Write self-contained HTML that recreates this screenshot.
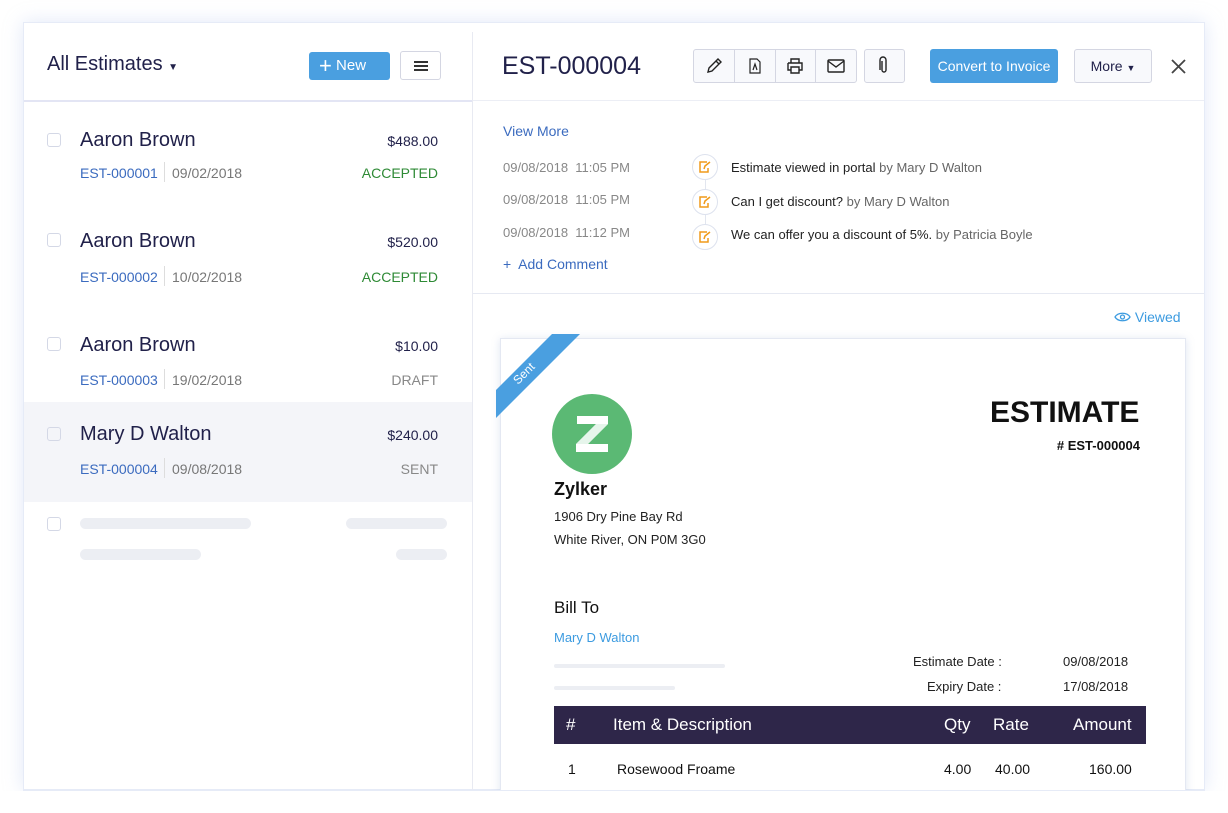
<!DOCTYPE html>
<html><head><meta charset="utf-8"><style>
*{box-sizing:border-box;margin:0;padding:0}
body{width:1228px;height:813px;background:#fff;font-family:"Liberation Sans",sans-serif;position:relative;overflow:hidden;color:#21214a}
.a{position:absolute}
.card{left:23px;top:22px;width:1182px;height:768px;border:1px solid #e6ebf7;box-shadow:0 0 18px rgba(170,190,235,.35);background:#fff}
.btn{border:1px solid #d4d6e2;border-radius:3px;background:#f8f9fc}
.name{font-size:20px;color:#21214a}
.amt{font-size:14px;color:#21214a;text-align:right;width:120px}
.est{font-size:14px;color:#3b6bbf}
.dt{font-size:14px;color:#777}
.st{font-size:14px;text-align:right;width:120px}
.cb{width:14px;height:14px;border:1.5px solid #d4d8e6;border-radius:3px}
.bar{background:#eceef3;border-radius:6px}
.t{font-size:13px;color:#222}
.g{font-size:13px;color:#888}
.ic{width:26px;height:26px;border-radius:50%;border:1px solid #dde2ee;background:#fff}
</style></head><body>
<div class="a card"></div>
<div class="a" style="left:472px;top:32px;width:1px;height:758px;background:#e8eaf2"></div>
<div class="a" style="left:24px;top:100px;width:448px;height:2px;background:#e3e5f4"></div>
<div class="a" style="left:473px;top:100px;width:731px;height:1px;background:#eceef5"></div>
<div class="a" style="left:47px;top:53px;font-size:20px;color:#21214a">All Estimates <span style="font-size:10px">▼</span></div>
<div class="a" style="left:309px;top:52px;width:81px;height:28px;background:#4a9fe0;border-radius:3px;color:#fff;font-size:15px;line-height:28px;padding-left:10px"><span style="font-size:22px;vertical-align:-3px;font-weight:300">+</span> New</div>
<div class="a btn" style="left:400px;top:51px;width:41px;height:29px;background:#fff"><div class="a" style="left:13px;top:9px;width:14px;height:2px;background:#333;box-shadow:0 4px 0 #333,0 8px 0 #333"></div></div>

<div class="a" style="left:24px;top:402px;width:448px;height:100px;background:#f4f5f9"></div>
<div class="a cb" style="left:47px;top:133px"></div>
<div class="a name" style="left:80px;top:129px">Aaron Brown</div>
<div class="a amt" style="left:318px;top:133px">$488.00</div>
<div class="a est" style="left:80px;top:165px">EST-000001</div><div class="a" style="left:164px;top:162px;width:1px;height:20px;background:#ddd"></div><div class="a dt" style="left:172px;top:165px">09/02/2018</div>
<div class="a st" style="left:318px;top:165px;color:#2e8a35">ACCEPTED</div>

<div class="a cb" style="left:47px;top:233px"></div>
<div class="a name" style="left:80px;top:230px">Aaron Brown</div>
<div class="a amt" style="left:318px;top:234px">$520.00</div>
<div class="a est" style="left:80px;top:269px">EST-000002</div><div class="a" style="left:164px;top:266px;width:1px;height:20px;background:#ddd"></div><div class="a dt" style="left:172px;top:269px">10/02/2018</div>
<div class="a st" style="left:318px;top:269px;color:#2e8a35">ACCEPTED</div>

<div class="a cb" style="left:47px;top:337px"></div>
<div class="a name" style="left:80px;top:334px">Aaron Brown</div>
<div class="a amt" style="left:318px;top:338px">$10.00</div>
<div class="a est" style="left:80px;top:372px">EST-000003</div><div class="a" style="left:164px;top:369px;width:1px;height:20px;background:#ddd"></div><div class="a dt" style="left:172px;top:372px">19/02/2018</div>
<div class="a st" style="left:318px;top:372px;color:#888">DRAFT</div>

<div class="a cb" style="left:47px;top:427px"></div>
<div class="a name" style="left:80px;top:423px">Mary D Walton</div>
<div class="a amt" style="left:318px;top:427px">$240.00</div>
<div class="a est" style="left:80px;top:461px">EST-000004</div><div class="a" style="left:164px;top:458px;width:1px;height:20px;background:#ddd"></div><div class="a dt" style="left:172px;top:461px">09/08/2018</div>
<div class="a st" style="left:318px;top:461px;color:#888">SENT</div>

<div class="a cb" style="left:47px;top:517px"></div>
<div class="a bar" style="left:80px;top:518px;width:171px;height:11px"></div>
<div class="a bar" style="left:346px;top:518px;width:101px;height:11px"></div>
<div class="a bar" style="left:80px;top:549px;width:121px;height:11px"></div>
<div class="a bar" style="left:396px;top:549px;width:51px;height:11px"></div>

<div class="a" style="left:502px;top:52px;font-size:25px;color:#21214a">EST-000004</div>
<div class="a btn" style="left:693px;top:49px;width:164px;height:34px"></div>
<div class="a" style="left:734px;top:50px;width:1px;height:32px;background:#d4d6e2;box-shadow:41px 0 #d4d6e2,81px 0 #d4d6e2"></div>
<svg class="a" style="left:704px;top:56px" width="20" height="20" viewBox="0 0 20 20" fill="none" stroke="#222" stroke-width="1.4"><path d="M4 16l1-4 9-9 3 3-9 9z M12 5l3 3"/></svg>
<svg class="a" style="left:746px;top:57px" width="18" height="18" viewBox="0 0 18 18" fill="none" stroke="#222" stroke-width="1.2"><path d="M4 2h7l3 3v11H4z M7 13l2-6 2 6"/></svg>
<svg class="a" style="left:785px;top:56px" width="20" height="20" viewBox="0 0 20 20" fill="none" stroke="#222" stroke-width="1.4"><path d="M6 7V3h8v4 M3 7h14v7h-3 M6 14H3V7 M6 11h8v6H6z"/></svg>
<svg class="a" style="left:826px;top:57px" width="20" height="18" viewBox="0 0 20 18" fill="none" stroke="#222" stroke-width="1.4"><rect x="2" y="3" width="16" height="12" rx="1"/><path d="M2 4l8 6 8-6"/></svg>
<div class="a btn" style="left:864px;top:49px;width:41px;height:34px"></div>
<svg class="a" style="left:877px;top:56px" width="14" height="20" viewBox="0 0 14 20" fill="none" stroke="#222" stroke-width="1.4"><path d="M5 5v9a2 2 0 004 0V4a3 3 0 00-6 0v10"/></svg>
<div class="a" style="left:930px;top:49px;width:128px;height:34px;background:#4a9fe0;border-radius:3px;color:#fff;font-size:14px;line-height:34px;text-align:center">Convert to Invoice</div>
<div class="a btn" style="left:1074px;top:49px;width:78px;height:34px;font-size:14px;line-height:32px;text-align:center;color:#21214a">More <span style="font-size:9px">▼</span></div>
<svg class="a" style="left:1171px;top:59px" width="15" height="15" viewBox="0 0 15 15" stroke="#444" stroke-width="1.8"><path d="M1 1l13 13M14 1L1 14"/></svg>

<div class="a" style="left:503px;top:123px;font-size:14px;color:#3b6bbf">View More</div>
<div class="a" style="left:705px;top:175px;width:1px;height:60px;background:#e2e6ef"></div>
<div class="a g" style="left:503px;top:160px">09/08/2018&nbsp; 11:05 PM</div>
<div class="a g" style="left:503px;top:192px">09/08/2018&nbsp; 11:05 PM</div>
<div class="a g" style="left:503px;top:225px">09/08/2018&nbsp; 11:12 PM</div>
<div class="a ic" style="left:692px;top:154px"></div><div class="a ic" style="left:692px;top:189px"></div><div class="a ic" style="left:692px;top:224px"></div>
<svg class="a" style="left:698px;top:160px" width="14" height="14" viewBox="0 0 14 14" fill="none" stroke="#f09a1a" stroke-width="1.5"><path d="M9 2H2v10h8V8 M6 9l1-3 5-4"/></svg>
<svg class="a" style="left:698px;top:195px" width="14" height="14" viewBox="0 0 14 14" fill="none" stroke="#f09a1a" stroke-width="1.5"><path d="M9 2H2v10h8V8 M6 9l1-3 5-4"/></svg>
<svg class="a" style="left:698px;top:230px" width="14" height="14" viewBox="0 0 14 14" fill="none" stroke="#f09a1a" stroke-width="1.5"><path d="M9 2H2v10h8V8 M6 9l1-3 5-4"/></svg>
<div class="a t" style="left:731px;top:160px">Estimate viewed in portal <span style="color:#666">by Mary D Walton</span></div>
<div class="a t" style="left:731px;top:194px">Can I get discount? <span style="color:#666">by Mary D Walton</span></div>
<div class="a t" style="left:731px;top:227px">We can offer you a discount of 5%. <span style="color:#666">by Patricia Boyle</span></div>
<div class="a" style="left:503px;top:256px;font-size:14px;color:#3b6bbf">+&nbsp; Add Comment</div>
<div class="a" style="left:473px;top:293px;width:731px;height:1px;background:#e6e9f2"></div>
<div class="a" style="left:1114px;top:309px;font-size:14px;color:#3c9be0">
<svg width="17" height="12" viewBox="0 0 17 12" fill="none" stroke="#3c9be0" stroke-width="1.3" style="vertical-align:-1px"><path d="M1 6c3-5 12-5 15 0-3 5-12 5-15 0z"/><circle cx="8.5" cy="6" r="2"/></svg> Viewed</div>

<div class="a" style="left:500px;top:338px;width:686px;height:460px;background:#fff;border:1px solid #e4e8f2;box-shadow:0 1px 8px rgba(150,170,210,.3)"></div>
<svg class="a" style="left:496px;top:334px" width="84" height="86"><polygon points="0,56 56,0 84,0 0,84" fill="#4a9fe0"/><text x="0" y="0" transform="translate(22,51) rotate(-45)" fill="#fff" font-size="12" font-family="Liberation Sans">Sent</text></svg>
<svg class="a" style="left:552px;top:394px" width="80" height="80" viewBox="0 0 80 80"><circle cx="40" cy="40" r="40" fill="#5bb974"/><path d="M25 22h31v8L36 50h20v8H24v-8l20-20H25z" fill="#fff"/><path d="M44 30h12v0L36 50H24z" fill="#d6eedd" opacity=".6"/></svg>
<div class="a" style="left:554px;top:479px;font-size:18px;font-weight:bold;color:#111">Zylker</div>
<div class="a t" style="left:554px;top:509px">1906 Dry Pine Bay Rd</div>
<div class="a t" style="left:554px;top:532px">White River, ON P0M 3G0</div>
<div class="a" style="left:990px;top:396px;font-size:30px;font-weight:bold;color:#111">ESTIMATE</div>
<div class="a" style="left:1047px;top:438px;font-size:13px;font-weight:bold;color:#111;width:93px;text-align:right"># EST-000004</div>
<div class="a" style="left:554px;top:598px;font-size:17px;color:#111">Bill To</div>
<div class="a" style="left:554px;top:630px;font-size:13px;color:#3c9be0">Mary D Walton</div>
<div class="a bar" style="left:554px;top:664px;width:171px;height:4px"></div>
<div class="a bar" style="left:554px;top:686px;width:121px;height:4px"></div>
<div class="a t" style="left:913px;top:654px">Estimate Date :</div><div class="a t" style="left:1063px;top:654px">09/08/2018</div>
<div class="a t" style="left:927px;top:679px">Expiry Date :</div><div class="a t" style="left:1063px;top:679px">17/08/2018</div>
<div class="a" style="left:554px;top:706px;width:592px;height:38px;background:#2e2649;color:#fff;font-size:17px;line-height:38px">
<span class="a" style="left:12px">#</span><span class="a" style="left:59px">Item &amp; Description</span><span class="a" style="left:390px">Qty</span><span class="a" style="left:439px">Rate</span><span class="a" style="left:519px">Amount</span></div>
<div class="a" style="left:568px;top:761px;font-size:14px;color:#111">1</div>
<div class="a" style="left:617px;top:761px;font-size:14px;color:#111">Rosewood Froame</div>
<div class="a" style="left:944px;top:761px;font-size:14px;color:#111">4.00</div>
<div class="a" style="left:995px;top:761px;font-size:14px;color:#111">40.00</div>
<div class="a" style="left:1089px;top:761px;font-size:14px;color:#111">160.00</div>
<div class="a" style="left:0;top:791px;width:1228px;height:22px;background:#fff"></div>
<div class="a" style="left:23px;top:790px;width:1182px;height:1px;background:#e6ebf7"></div>
</body></html>
